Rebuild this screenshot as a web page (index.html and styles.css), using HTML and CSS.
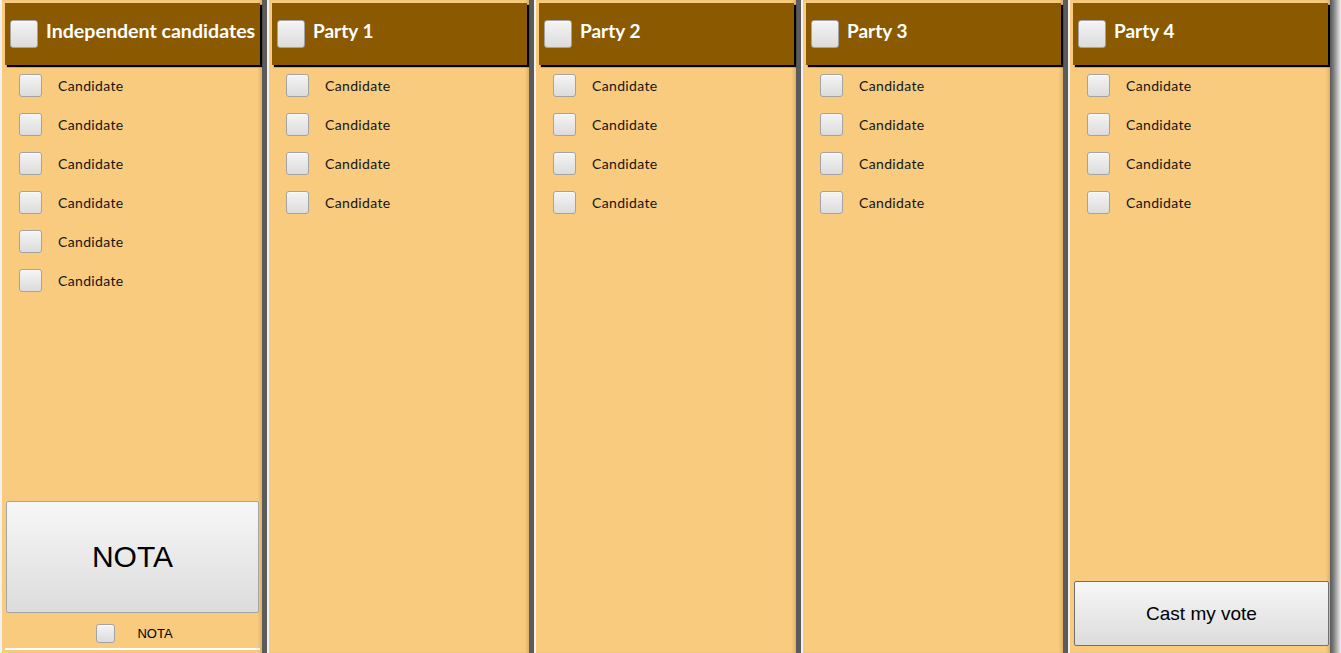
FILE: index.html
```html
<!DOCTYPE html>
<html lang="en">
<head>
<meta charset="utf-8">
<title>Ballot</title>
<link rel="stylesheet" href="styles.css">
</head>
<body>
<div class="board">
  <section class="col">
    <header class="head"><span class="box box-lg"></span><h2 class="title title-wide">Independent candidates</h2></header>
    <ul class="list">
      <li class="cand"><span class="box box-md"></span><span class="name">Candidate</span></li>
      <li class="cand"><span class="box box-md"></span><span class="name">Candidate</span></li>
      <li class="cand"><span class="box box-md"></span><span class="name">Candidate</span></li>
      <li class="cand"><span class="box box-md"></span><span class="name">Candidate</span></li>
      <li class="cand"><span class="box box-md"></span><span class="name">Candidate</span></li>
      <li class="cand"><span class="box box-md"></span><span class="name">Candidate</span></li>
    </ul>
    <div class="foot">
      <button class="nota-btn">NOTA</button>
      <div class="nota-row"><span class="box box-sm"></span><span class="nota-label">NOTA</span></div>
      <div class="rule"></div>
    </div>
  </section>
  <section class="col">
    <header class="head"><span class="box box-lg"></span><h2 class="title">Party 1</h2></header>
    <ul class="list">
      <li class="cand"><span class="box box-md"></span><span class="name">Candidate</span></li>
      <li class="cand"><span class="box box-md"></span><span class="name">Candidate</span></li>
      <li class="cand"><span class="box box-md"></span><span class="name">Candidate</span></li>
      <li class="cand"><span class="box box-md"></span><span class="name">Candidate</span></li>
    </ul>
  </section>
  <section class="col">
    <header class="head"><span class="box box-lg"></span><h2 class="title">Party 2</h2></header>
    <ul class="list">
      <li class="cand"><span class="box box-md"></span><span class="name">Candidate</span></li>
      <li class="cand"><span class="box box-md"></span><span class="name">Candidate</span></li>
      <li class="cand"><span class="box box-md"></span><span class="name">Candidate</span></li>
      <li class="cand"><span class="box box-md"></span><span class="name">Candidate</span></li>
    </ul>
  </section>
  <section class="col">
    <header class="head"><span class="box box-lg"></span><h2 class="title">Party 3</h2></header>
    <ul class="list">
      <li class="cand"><span class="box box-md"></span><span class="name">Candidate</span></li>
      <li class="cand"><span class="box box-md"></span><span class="name">Candidate</span></li>
      <li class="cand"><span class="box box-md"></span><span class="name">Candidate</span></li>
      <li class="cand"><span class="box box-md"></span><span class="name">Candidate</span></li>
    </ul>
  </section>
  <section class="col">
    <header class="head"><span class="box box-lg"></span><h2 class="title">Party 4</h2></header>
    <ul class="list">
      <li class="cand"><span class="box box-md"></span><span class="name">Candidate</span></li>
      <li class="cand"><span class="box box-md"></span><span class="name">Candidate</span></li>
      <li class="cand"><span class="box box-md"></span><span class="name">Candidate</span></li>
      <li class="cand"><span class="box box-md"></span><span class="name">Candidate</span></li>
    </ul>
    <div class="foot">
      <button class="cast-btn">Cast my vote</button>
    </div>
  </section>
  <div class="edge"></div>
</div>
</body>
</html>
```

FILE: styles.css
```css
html, body {
  margin: 0;
  padding: 0;
  height: 100%;
  overflow: hidden;
}

body {
  background: #5b5b5b;
  font-family: "Lato", "Open Sans", sans-serif;
}

.board {
  display: flex;
  height: 653px;
  background: #5b5b5b;
}

.col {
  width: 260px;
  flex: none;
  border-left: 2px solid #f1f1f1;
  background: #f8cb7f;
  display: flex;
  flex-direction: column;
  box-shadow: inset -3px 0 3px -1px rgba(120, 70, 0, 0.2);
}

.col + .col {
  margin-left: 5px;
}

.edge {
  width: 11px;
  flex: none;
  background: linear-gradient(to right, #585858 0%, #7a7a7a 30%, #bdbdbd 70%, #efefef 100%);
}

.head {
  box-sizing: border-box;
  margin: 3px 0 0 3px;
  width: 255px;
  height: 62px;
  background: #8b5a00;
  box-shadow: 2px 2px 1px #000;
  display: flex;
  align-items: center;
  padding-left: 5px;
  gap: 8px;
  flex: none;
}

.title {
  margin: 0 0 7px;
  color: #fff;
  font-family: "Lato", sans-serif;
  font-weight: 700;
  font-size: 19px;
  line-height: 1;
  white-space: nowrap;
}

.title-wide {
  font-size: 19.6px;
}

.box {
  box-sizing: border-box;
  display: inline-block;
  flex: none;
  border: 1px solid #a3a3a3;
  border-radius: 3px;
  background: linear-gradient(#f4f4f4, #dcdcdc);
  box-shadow: inset 0 1px 0 #fafafa;
}

.box-lg {
  width: 28px;
  height: 28px;
}

.box-md {
  width: 23px;
  height: 23px;
}

.box-sm {
  width: 19px;
  height: 19px;
}

.list {
  list-style: none;
  margin: 1px 0 0;
  padding: 0;
}

.cand {
  height: 39px;
  display: flex;
  align-items: center;
  padding-left: 17px;
  gap: 16px;
}

.name {
  font-family: "Lato", sans-serif;
  font-size: 14px;
  letter-spacing: 0.35px;
  color: #141414;
}

.foot {
  margin-top: auto;
  display: flex;
  flex-direction: column;
}

.nota-btn {
  box-sizing: border-box;
  margin: 0 0 0 4px;
  width: 253px;
  height: 112px;
  font-family: "Liberation Sans", Arial, sans-serif;
  font-size: 30px;
  color: #000;
  border: 1px solid #a5a5a5;
  border-radius: 2px;
  background: linear-gradient(#f7f7f7, #dcdcdc);
  padding: 0;
}

.nota-row {
  box-sizing: border-box;
  height: 35px;
  padding-top: 6px;
  padding-left: 5px;
  display: flex;
  align-items: center;
  justify-content: center;
  gap: 22px;
}

.nota-label {
  font-family: "Liberation Sans", Arial, sans-serif;
  font-size: 13px;
  color: #000;
}

.rule {
  height: 2px;
  margin: 0 2px 3px 3px;
  background: #fff;
}

.cast-btn {
  box-sizing: border-box;
  margin: 0 1px 7px 4px;
  width: 255px;
  height: 65px;
  font-family: "Liberation Sans", Arial, sans-serif;
  font-size: 19px;
  color: #000;
  border: 1px solid #707070;
  border-radius: 2px;
  background: linear-gradient(#f7f7f7, #dcdcdc);
  padding: 0;
}
```
